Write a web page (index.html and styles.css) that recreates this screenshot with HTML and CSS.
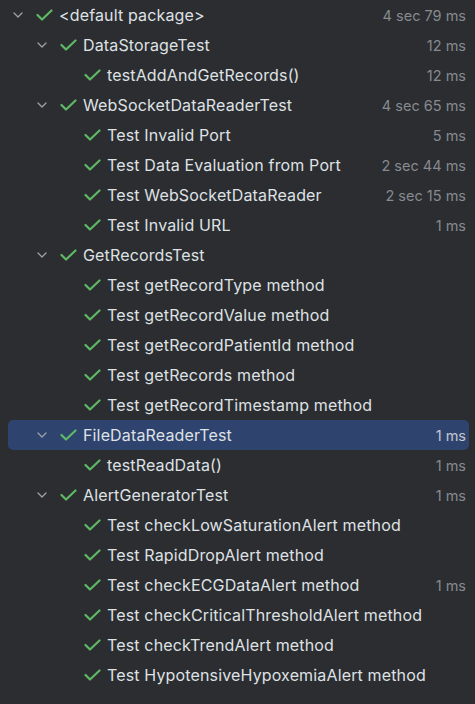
FILE: index.html
```html
<!DOCTYPE html>
<html>
<head>
<meta charset="utf-8">
<link rel="stylesheet" href="styles.css">
</head>
<body>
<svg width="0" height="0" class="defs">
  <defs>
    <symbol id="chev" viewBox="0 0 10 6"><path d="M1 1 L5 5 L9 1" fill="none" stroke="#9da0a8" stroke-width="1.3" stroke-linecap="round" stroke-linejoin="round"/></symbol>
    <symbol id="check" viewBox="0 0 17 12"><path d="M1.5 6 L6 10.5 L15.5 1.5" fill="none" stroke="#5fb865" stroke-width="2.2" stroke-linecap="round" stroke-linejoin="round"/></symbol>
  </defs>
</svg>
<div class="tree">
  <div class="row l0"><span class="chev"><svg><use href="#chev"/></svg></span><svg class="check"><use href="#check"/></svg><span class="name">&lt;default package&gt;</span><span class="time">4 sec 79 ms</span></div>
  <div class="row l1"><span class="chev"><svg><use href="#chev"/></svg></span><svg class="check"><use href="#check"/></svg><span class="name">DataStorageTest</span><span class="time">12 ms</span></div>
  <div class="row l2"><span class="chev"></span><svg class="check"><use href="#check"/></svg><span class="name">testAddAndGetRecords()</span><span class="time">12 ms</span></div>
  <div class="row l1"><span class="chev"><svg><use href="#chev"/></svg></span><svg class="check"><use href="#check"/></svg><span class="name">WebSocketDataReaderTest</span><span class="time">4 sec 65 ms</span></div>
  <div class="row l2"><span class="chev"></span><svg class="check"><use href="#check"/></svg><span class="name">Test Invalid Port</span><span class="time">5 ms</span></div>
  <div class="row l2"><span class="chev"></span><svg class="check"><use href="#check"/></svg><span class="name">Test Data Evaluation from Port</span><span class="time">2 sec 44 ms</span></div>
  <div class="row l2"><span class="chev"></span><svg class="check"><use href="#check"/></svg><span class="name">Test WebSocketDataReader</span><span class="time">2 sec 15 ms</span></div>
  <div class="row l2"><span class="chev"></span><svg class="check"><use href="#check"/></svg><span class="name">Test Invalid URL</span><span class="time">1 ms</span></div>
  <div class="row l1"><span class="chev"><svg><use href="#chev"/></svg></span><svg class="check"><use href="#check"/></svg><span class="name">GetRecordsTest</span><span class="time"></span></div>
  <div class="row l2"><span class="chev"></span><svg class="check"><use href="#check"/></svg><span class="name">Test getRecordType method</span><span class="time"></span></div>
  <div class="row l2"><span class="chev"></span><svg class="check"><use href="#check"/></svg><span class="name">Test getRecordValue method</span><span class="time"></span></div>
  <div class="row l2"><span class="chev"></span><svg class="check"><use href="#check"/></svg><span class="name">Test getRecordPatientId method</span><span class="time"></span></div>
  <div class="row l2"><span class="chev"></span><svg class="check"><use href="#check"/></svg><span class="name">Test getRecords method</span><span class="time"></span></div>
  <div class="row l2"><span class="chev"></span><svg class="check"><use href="#check"/></svg><span class="name">Test getRecordTimestamp method</span><span class="time"></span></div>
  <div class="row l1 selected"><span class="chev"><svg><use href="#chev"/></svg></span><svg class="check"><use href="#check"/></svg><span class="name">FileDataReaderTest</span><span class="time">1 ms</span></div>
  <div class="row l2"><span class="chev"></span><svg class="check"><use href="#check"/></svg><span class="name">testReadData()</span><span class="time">1 ms</span></div>
  <div class="row l1"><span class="chev"><svg><use href="#chev"/></svg></span><svg class="check"><use href="#check"/></svg><span class="name">AlertGeneratorTest</span><span class="time">1 ms</span></div>
  <div class="row l2"><span class="chev"></span><svg class="check"><use href="#check"/></svg><span class="name">Test checkLowSaturationAlert method</span><span class="time"></span></div>
  <div class="row l2"><span class="chev"></span><svg class="check"><use href="#check"/></svg><span class="name">Test RapidDropAlert method</span><span class="time"></span></div>
  <div class="row l2"><span class="chev"></span><svg class="check"><use href="#check"/></svg><span class="name">Test checkECGDataAlert method</span><span class="time">1 ms</span></div>
  <div class="row l2"><span class="chev"></span><svg class="check"><use href="#check"/></svg><span class="name">Test checkCriticalThresholdAlert method</span><span class="time"></span></div>
  <div class="row l2"><span class="chev"></span><svg class="check"><use href="#check"/></svg><span class="name">Test checkTrendAlert method</span><span class="time"></span></div>
  <div class="row l2"><span class="chev"></span><svg class="check"><use href="#check"/></svg><span class="name">Test HypotensiveHypoxemiaAlert method</span><span class="time"></span></div>
</div>
</body>
</html>
```

FILE: styles.css
```css
html, body {
  margin: 0;
  padding: 0;
  background: #2b2d30;
  height: 100%;
}
body {
  font-family: Inter, "Noto Sans", sans-serif;
  font-size: 16px;
  color: #dfe1e5;
  overflow: hidden;
}
.defs {
  position: absolute;
  width: 0;
  height: 0;
}
.tree {
  display: flex;
  flex-direction: column;
}
.row {
  display: flex;
  align-items: center;
  height: 30px;
  margin: 0 6px 0 8px;
  padding-right: 3px;
  border-radius: 5px;
  white-space: nowrap;
}
.row.l0 { padding-left: 0; }
.row.l1 { padding-left: 24px; }
.row.l2 { padding-left: 48px; }
.row.selected {
  background: #2e436e;
}
.chev {
  flex: none;
  width: 20px;
  height: 30px;
  display: flex;
  align-items: center;
  justify-content: center;
}
.chev svg {
  width: 10px;
  height: 6px;
}
.check {
  flex: none;
  width: 17px;
  height: 12px;
  margin-left: 8px;
  margin-right: 6px;
}
.name {
  flex: 1;
  line-height: 30px;
  letter-spacing: 0.15px;
}
.time {
  flex: none;
  color: #868a91;
  font-size: 14.5px;
}
.selected .time {
  color: #c4c8d0;
}
```
